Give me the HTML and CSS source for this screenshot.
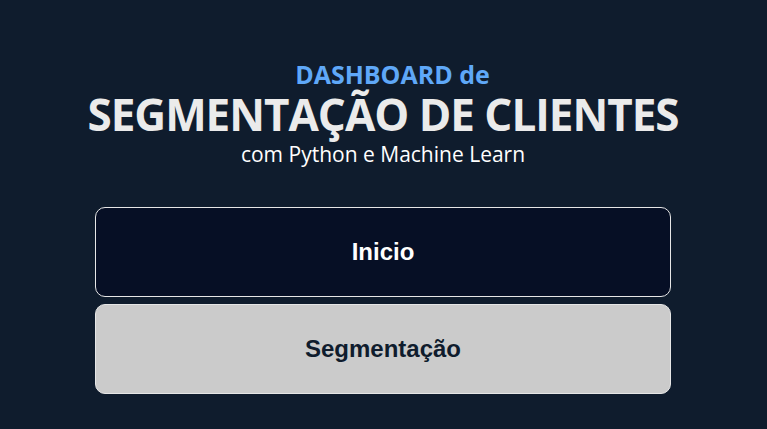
FILE: index.html
```html
<!DOCTYPE html>
<html lang="pt">
<head>
<meta charset="utf-8">
<title>Dashboard</title>
<link rel="stylesheet" href="styles.css">
</head>
<body>
<main class="page">
  <header class="hero">
    <div class="kicker">DASHBOARD de</div>
    <h1 class="title">SEGMENTAÇÃO DE CLIENTES</h1>
    <div class="subtitle">com Python e Machine Learn</div>
  </header>
  <nav class="menu">
    <button class="btn btn-dark">Inicio</button>
    <button class="btn btn-light">Segmentação</button>
  </nav>
</main>
</body>
</html>
```
FILE: styles.css
```css
html, body {
  margin: 0;
  padding: 0;
  background: #0f1c2d;
  height: 100%;
}
.page {
  display: flex;
  flex-direction: column;
  align-items: center;
  padding: 60px 1px 0 0;
}
.hero {
  display: flex;
  flex-direction: column;
  align-items: center;
  font-family: "Open Sans", "Noto Sans", sans-serif;
  color: #ebebeb;
}
.kicker {
  color: #5fa8f8;
  font-weight: 700;
  font-size: 25px;
  line-height: 28px;
  padding-left: 19px;
}
.title {
  margin: 3px 0 0;
  font-size: 44px;
  line-height: 46px;
  font-weight: 700;
  letter-spacing: -1px;
}
.subtitle {
  margin-top: 5px;
  font-size: 21px;
  line-height: 24px;
  color: #ffffff;
}
.menu {
  margin-top: 41px;
  width: 576px;
  display: flex;
  flex-direction: column;
  gap: 7px;
}
.btn {
  height: 90px;
  border: 1px solid #e6e6e6;
  border-radius: 10px;
  font-family: "Liberation Sans", Arial, sans-serif;
  font-weight: 700;
  font-size: 24px;
}
.btn-dark {
  background: #060f25;
  color: #ffffff;
}
.btn-light {
  background: #cbcbcb;
  color: #0f1c2d;
}
```
